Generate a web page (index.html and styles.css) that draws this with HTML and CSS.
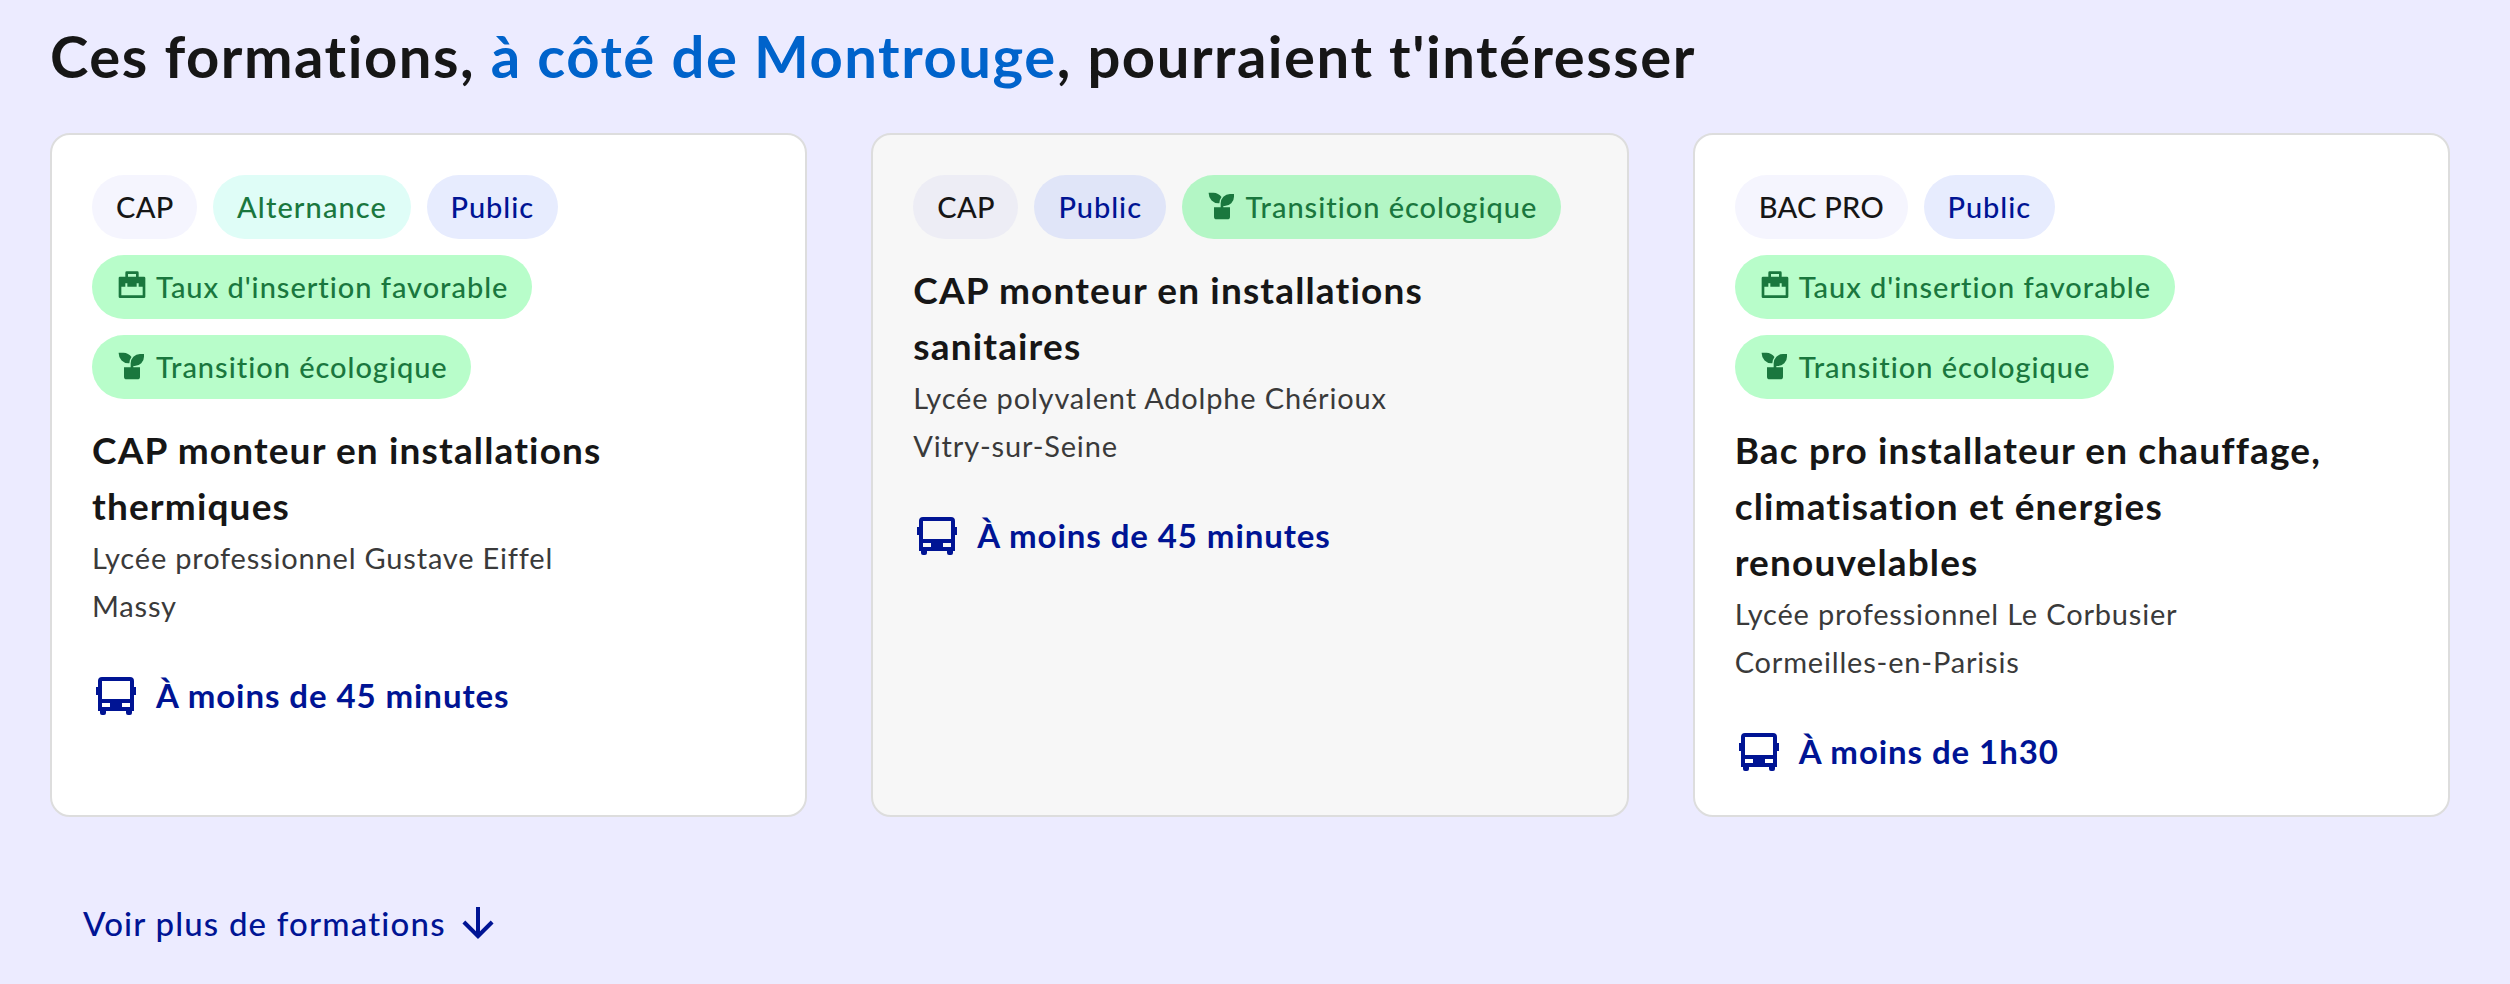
FILE: index.html
```html
<!DOCTYPE html>
<html lang="fr">
<head>
<meta charset="utf-8">
<title>Formations à côté de Montrouge</title>
<link rel="stylesheet" href="styles.css">
</head>
<body>
<svg class="sprite" aria-hidden="true">
  <symbol id="case" viewBox="0 0 24 24"><path fill-rule="evenodd" d="M7 5V2a1 1 0 0 1 1-1h8a1 1 0 0 1 1 1v3h4a1 1 0 0 1 1 1v14a1 1 0 0 1-1 1H3a1 1 0 0 1-1-1V6a1 1 0 0 1 1-1h4ZM9 3v2h6V3H9ZM4 12.500V19h16v-6.500h-3v-2.500h-1.500v2.500h-7V10H7v2.500H4Z"/></symbol>
  <symbol id="plant" viewBox="0 0 24 24"><path d="M21 3v2a7 7 0 0 1-7 7h-1v1h5v7a2 2 0 0 1-2 2H8a2 2 0 0 1-2-2v-7h5v-3a7 7 0 0 1 7-7h3ZM5.500 2c2.530 0 4.770 1.250 6.120 3.170A7.970 7.970 0 0 0 10 10h-.5A7.500 7.500 0 0 1 2 2.500V2h3.500Z"/></symbol>
  <symbol id="bus" viewBox="0 0 24 24"><path d="M17 20H7v1a1 1 0 0 1-1 1H5a1 1 0 0 1-1-1v-1H3v-8H2V8h1V5a2 2 0 0 1 2-2h14a2 2 0 0 1 2 2v3h1v4h-1v8h-1v1a1 1 0 0 1-1 1h-1a1 1 0 0 1-1-1v-1ZM5 5v9h14V5H5Zm0 11v2h4v-2H5Zm10 0v2h4v-2h-4Z"/></symbol>
  <symbol id="down" viewBox="0 0 24 24"><path d="m13 16.170 5.360-5.360 1.420 1.410L12 20l-7.780-7.780 1.420-1.410L11 16.170V4h2v12.170Z"/></symbol>
</svg>
<main class="page">
  <h2 class="heading">Ces formations, <span class="place">à côté de Montrouge</span>, pourraient t'intéresser</h2>
  <div class="cards">
    <article class="card">
      <div class="tags">
        <span class="tag level">CAP</span><span class="tag alt">Alternance</span><span class="tag public">Public</span>
        <span class="tag green"><svg class="tag-icon"><use href="#case"/></svg>Taux d'insertion favorable</span>
        <span class="tag green"><svg class="tag-icon"><use href="#plant"/></svg>Transition écologique</span>
      </div>
      <h3 class="title">CAP monteur en installations<br>thermiques</h3>
      <p class="school">Lycée professionnel Gustave Eiffel<br>Massy</p>
      <p class="travel"><svg class="bus"><use href="#bus"/></svg>À moins de 45 minutes</p>
    </article>
    <article class="card hovered">
      <div class="tags">
        <span class="tag level">CAP</span><span class="tag public">Public</span>
        <span class="tag green"><svg class="tag-icon"><use href="#plant"/></svg>Transition écologique</span>
      </div>
      <h3 class="title">CAP monteur en installations<br>sanitaires</h3>
      <p class="school">Lycée polyvalent Adolphe Chérioux<br>Vitry-sur-Seine</p>
      <p class="travel"><svg class="bus"><use href="#bus"/></svg>À moins de 45 minutes</p>
    </article>
    <article class="card">
      <div class="tags">
        <span class="tag level">BAC PRO</span><span class="tag public">Public</span>
        <span class="tag green"><svg class="tag-icon"><use href="#case"/></svg>Taux d'insertion favorable</span>
        <span class="tag green"><svg class="tag-icon"><use href="#plant"/></svg>Transition écologique</span>
      </div>
      <h3 class="title">Bac pro installateur en chauffage,<br>climatisation et énergies<br>renouvelables</h3>
      <p class="school">Lycée professionnel Le Corbusier<br>Cormeilles-en-Parisis</p>
      <p class="travel"><svg class="bus"><use href="#bus"/></svg>À moins de 1h30</p>
    </article>
  </div>
  <a class="more">Voir plus de formations<svg class="arrow"><use href="#down"/></svg></a>
</main>
</body>
</html>
```
FILE: styles.css
```css
* { box-sizing: border-box; }
body { margin: 0; background: #ecebff; color: #161616; font-family: Lato, "Open Sans", sans-serif; font-variant-ligatures: none; }
h2, h3, p { margin: 0; }
svg { fill: currentColor; flex: none; }
.sprite { display: none; }
.page { padding: 20px 60px 0 50px; }
.heading { font-size: 58px; line-height: 72px; font-weight: 700; letter-spacing: 1.52px; white-space: nowrap; }
.place { color: #0063cb; }
.cards { display: grid; grid-template-columns: repeat(3, 1fr); gap: 64px; margin-top: 41px; height: 684px; }
.card { background: #fff; border: 2px solid #ddd; border-radius: 20px; padding: 40px; }
.hovered { background: #f7f7f7; }
.tags { display: flex; flex-wrap: wrap; gap: 16px; }
.tag { display: flex; align-items: center; height: 64px; padding: 0 23.5px 1px 24px; border-radius: 32px; font-size: 29px; font-weight: 500; letter-spacing: 0.97px; white-space: nowrap; }
.tag-icon { width: 32px; height: 32px; margin: -2px 8px 0 0; }
.level { background: #f5f5fe; letter-spacing: 0.3px; }
.alt { background: #dffdf7; color: #1a773e; letter-spacing: 1.1px; }
.public { background: #e7ecfe; color: #001494; }
.green { background: #b8fdca; color: #1a773e; }
.hovered .level { background: #ededf5; }
.hovered .public { background: #e0e5f8; }
.hovered .green { background: #b3f6c5; }
.title { margin-top: 23px; font-size: 37px; line-height: 56px; font-weight: 700; letter-spacing: 1.15px; white-space: nowrap; }
.school { font-size: 29px; line-height: 48px; letter-spacing: 0.82px; color: #3a3a3a; }
.travel { display: flex; align-items: center; gap: 16px; margin-top: 41px; height: 48px; font-size: 33px; font-weight: 700; letter-spacing: 0.92px; color: #001494; }
.bus { width: 48px; height: 48px; }
.more { display: inline-flex; align-items: center; gap: 12px; height: 48px; margin: 82px 0 0 33px; font-size: 33px; line-height: 48px; font-weight: 500; letter-spacing: 1.18px; color: #001494; }
.arrow { width: 48px; height: 48px; margin-left: -4px; }
```
